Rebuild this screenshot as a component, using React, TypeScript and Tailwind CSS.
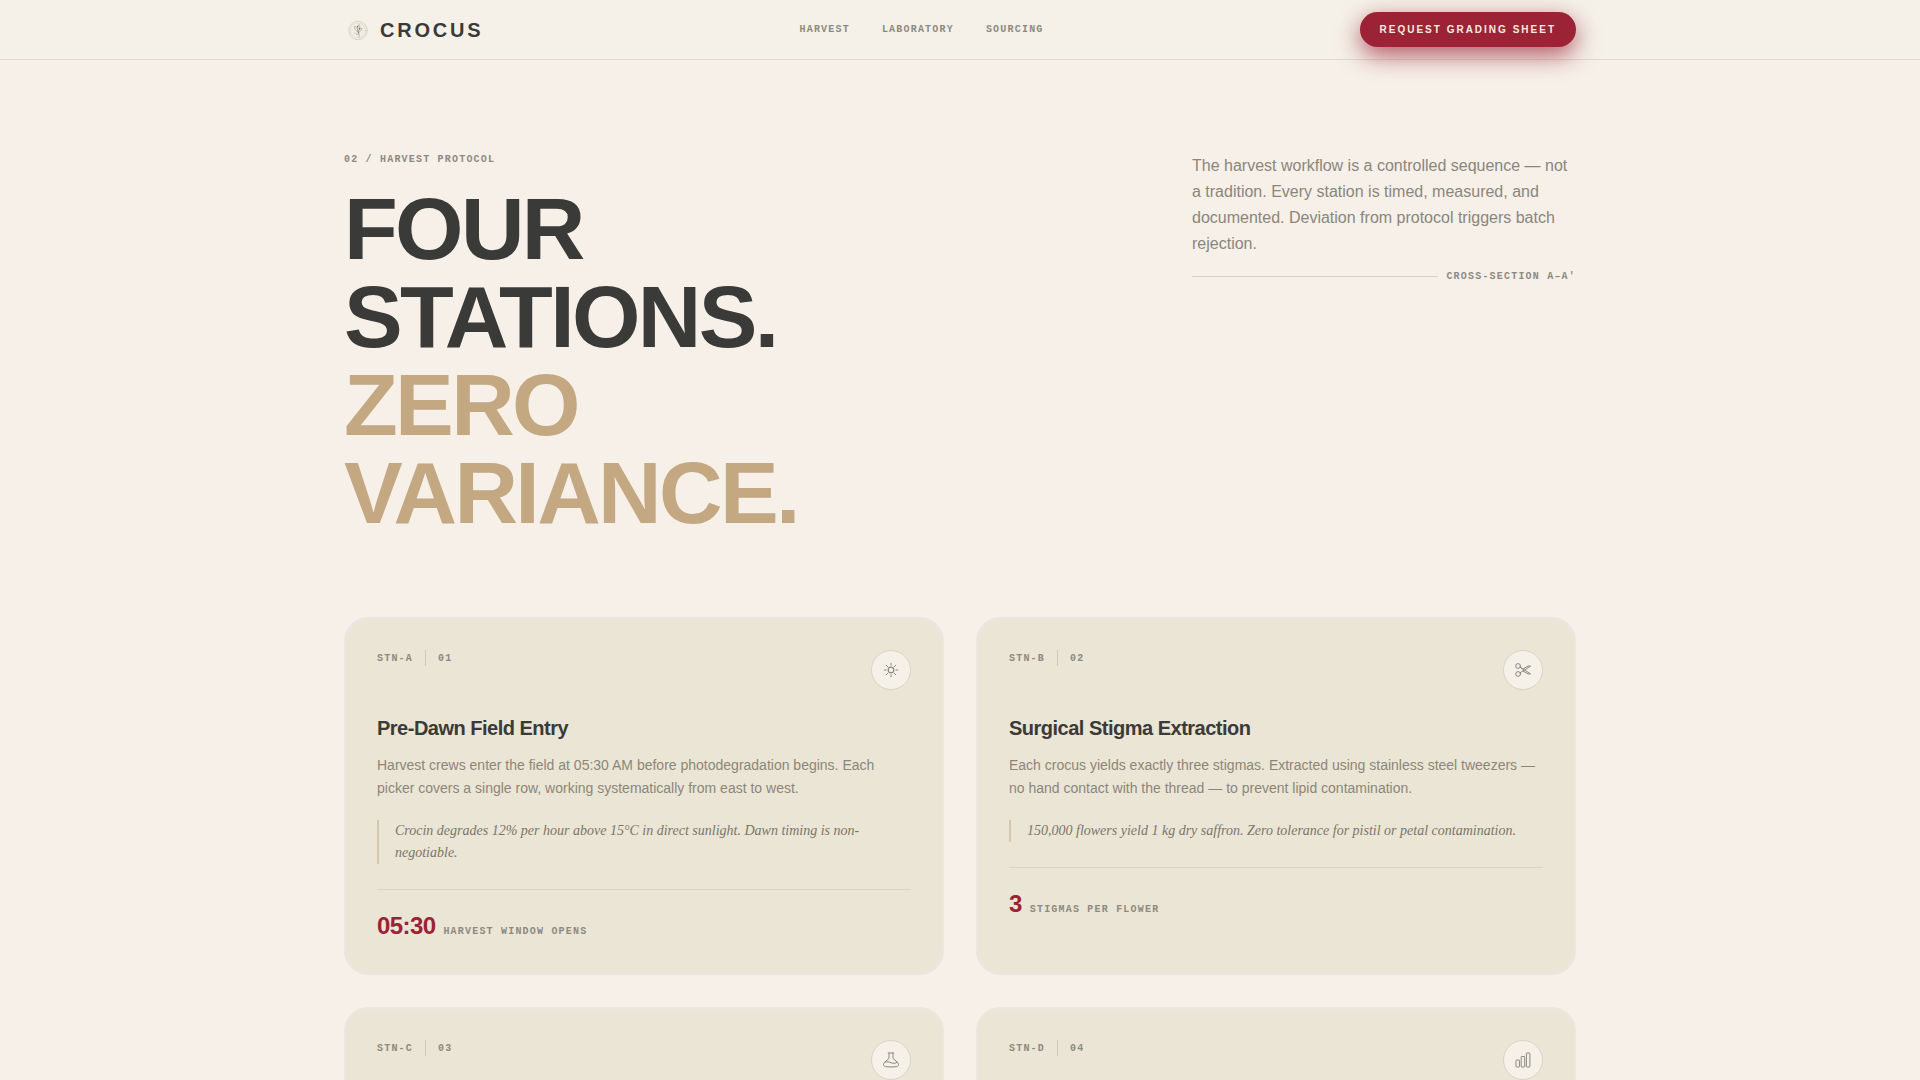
import React from 'react';

interface Station {
  code: string;
  index: string;
  icon: React.ReactNode;
  title?: string;
  body?: string;
  note?: string;
  value?: string;
  unit?: string;
}

const NAV_LINKS = ['Harvest', 'Laboratory', 'Sourcing'];

const LABEL = 'font-[Liberation_Mono,monospace] text-[10px] leading-[15px] font-bold uppercase tracking-[0.12em] text-[#8d8a80]';

const SunIcon = () => (
  <svg className="w-4 h-4" viewBox="0 0 16 16" fill="none" stroke="currentColor" strokeLinecap="round" aria-hidden="true">
    <circle cx="8" cy="8" r="2.8" strokeWidth="1.2" />
    <path strokeWidth="1" d="M8 1.2v2M8 12.8v2M1.2 8h2M12.8 8h2M3.2 3.2l1.4 1.4M11.4 11.4l1.4 1.4M3.2 12.8l1.4-1.4M11.4 4.6l1.4-1.4" />
  </svg>
);

const ScissorsIcon = () => (
  <svg className="w-4 h-4" viewBox="0 0 16 16" fill="none" stroke="currentColor" strokeWidth="1" strokeLinecap="round" strokeLinejoin="round" aria-hidden="true">
    <circle cx="3.1" cy="4" r="2.4" />
    <circle cx="3.1" cy="12" r="2.4" />
    <path d="M5.2 5.3L8 7l5-2.9c.8-.4 1.7-.4 2.5.1L5.2 10.7M5.2 5.3l10.3 6.5c-.8.5-1.700.5-2.500.1L8 9" />
  </svg>
);

const FlaskIcon = () => (
  <svg className="w-4 h-4" viewBox="0 0 16 16" fill="none" stroke="currentColor" strokeWidth="1" strokeLinecap="round" strokeLinejoin="round" aria-hidden="true">
    <path d="M5.2 1h5.6M6 1v5.4L1.4 10.5C-.2 11.9.5 14.5 2.7 14.7c3.5.4 7.1.4 10.6 0 2.2-.2 2.9-2.8 1.3-4.2L10 6.4V1" />
    <path d="M2 10.2c2-.7 4-.5 6 .5 2 .9 4 .9 6.3-.3" />
  </svg>
);

const BarsIcon = () => (
  <svg className="w-4 h-4" viewBox="0 0 16 16" fill="none" stroke="currentColor" strokeWidth="1" strokeLinejoin="round" aria-hidden="true">
    <rect x="1" y="8" width="3.5" height="7" rx="0.6" />
    <rect x="6.2" y="4.5" width="3.5" height="10.5" rx="0.6" />
    <rect x="11.4" y="1" width="3.5" height="14" rx="0.6" />
  </svg>
);

const Emblem = () => (
  <svg className="w-7 h-7 text-[#aaa798]" viewBox="0 0 28 28" fill="none" stroke="currentColor" strokeLinecap="round" aria-hidden="true">
    <circle cx="14" cy="14.5" r="9.3" fill="#efebe0" strokeWidth="0.6" opacity="0.6" />
    <circle cx="14" cy="14.5" r="7.5" strokeWidth="0.4" opacity="0.5" />
    <path strokeWidth="0.9" opacity="0.8" d="M15 21c.3-2 .2-3.500-1-5.500M14 15.500c-2.500-.5-3.800-2.300-3.500-5 2 .5 3.200 2 3.500 5zM14 15.500c-.8-2.800-.5-5 1-7 1.500 2.200 1.200 4.800-1 7zM14 15.500c.8-2 2-3 4-3.300 0 2-1.500 3.500-4 3.300zM14.500 18.500c-1.500.3-2.700-.2-3.500-1.500" />
    <path strokeWidth="1.4" stroke="#77756a" d="M13.5 10.500v.3M15.5 12.500v.3M14.500 16.500v.3" />
  </svg>
);

const STATIONS: Station[] = [
  {
    code: 'STN-A',
    index: '01',
    icon: <SunIcon />,
    title: 'Pre-Dawn Field Entry',
    body: 'Harvest crews enter the field at 05:30 AM before photodegradation begins. Each picker covers a single row, working systematically from east to west.',
    note: 'Crocin degrades 12% per hour above 15°C in direct sunlight. Dawn timing is non-negotiable.',
    value: '05:30',
    unit: 'Harvest window opens',
  },
  {
    code: 'STN-B',
    index: '02',
    icon: <ScissorsIcon />,
    title: 'Surgical Stigma Extraction',
    body: 'Each crocus yields exactly three stigmas. Extracted using stainless steel tweezers — no hand contact with the thread — to prevent lipid contamination.',
    note: '150,000 flowers yield 1 kg dry saffron. Zero tolerance for pistil or petal contamination.',
    value: '3',
    unit: 'Stigmas per flower',
  },
  { code: 'STN-C', index: '03', icon: <FlaskIcon /> },
  { code: 'STN-D', index: '04', icon: <BarsIcon /> },
];

const StationCard = ({ station }: { station: Station }) => (
  <article className="rounded-3xl border border-[#ebe7e0] bg-[#ebe5d5] p-8 shadow-[inset_0_0_0_2px_#e9e6dc]">
    <div className="flex items-start justify-between">
      <div className="flex items-center gap-3">
        <span className={LABEL}>{station.code}</span>
        <span className="w-px h-4 bg-[#cfc9bb]" />
        <span className={LABEL}>{station.index}</span>
      </div>
      <div className="w-10 h-10 rounded-full border border-[#d9d3c5] bg-[#f6f1e8] text-[#8d887e] flex items-center justify-center">
        {station.icon}
      </div>
    </div>

    {station.title && (
      <>
        <h2 className="mt-6 text-xl font-bold tracking-tight text-[#3a3a38]">{station.title}</h2>
        <p className="mt-3 text-sm leading-[23px] text-[#8b867b]">{station.body}</p>
        <blockquote className="mt-5 border-l-2 border-[#d7c8ab] pl-4 font-[Liberation_Serif,serif] text-sm leading-[22px] italic text-[#7a756a]">
          {station.note}
        </blockquote>
        <div className="mt-[25px] border-t border-[#d9d3c5] pt-5 flex items-baseline gap-2">
          <span className="text-2xl font-bold tracking-tight text-[#9b2335]">{station.value}</span>
          <span className={LABEL}>{station.unit}</span>
        </div>
      </>
    )}
  </article>
);

const App: React.FC = () => {
  return (
    <div className="min-h-screen bg-[#f6f0e9] font-[Liberation_Sans,Arial,sans-serif] text-[#3a3a38]">
      <header className="border-b border-[#dfdbd2] bg-[#f5f1e9]">
        <div className="max-w-7xl mx-auto px-6 py-3 flex items-center justify-between">
          <a href="#" className="flex items-center gap-2">
            <Emblem />
            <span className="text-xl font-bold tracking-[0.14em]">CROCUS</span>
          </a>
          <nav className="flex items-center gap-8">
            {NAV_LINKS.map((link) => (
              <a key={link} href={`#${link.toLowerCase()}`} className={LABEL}>{link}</a>
            ))}
          </nav>
          <button className="rounded-full bg-[#9b2335] px-5 py-2.5 text-[10px] leading-[15px] font-bold uppercase tracking-[0.2em] text-[#f7ece0] shadow-[0_8px_24px_rgba(155,35,53,0.75)]">
            Request Grading Sheet
          </button>
        </div>
      </header>

      <main id="harvest" className="max-w-7xl mx-auto px-6 pt-23 pb-20">
        <div className="flex items-start justify-between">
          <div>
            <p className={LABEL}>02 / Harvest Protocol</p>
            <h1 className="mt-[18px] text-[88px] leading-[88px] font-bold tracking-[-0.03em]">
              FOUR<br />STATIONS.<br />
              <span className="text-[#c4a882]">ZERO<br />VARIANCE.</span>
            </h1>
          </div>
          <div className="w-96 pt-px">
            <p className="text-base leading-[26px] text-[#8b867b]">
              The harvest workflow is a controlled sequence — not a tradition. Every station is timed, measured, and documented. Deviation from protocol triggers batch rejection.
            </p>
            <div className="mt-3 flex items-center gap-2">
              <span className="h-px flex-1 bg-[#d9d2c9]" />
              <span className={LABEL}>Cross-Section A–A'</span>
            </div>
          </div>
        </div>

        <div className="mt-20 grid grid-cols-2 gap-8">
          {STATIONS.map((station) => (
            <StationCard key={station.code} station={station} />
          ))}
        </div>
      </main>
    </div>
  );
};

export default App;
